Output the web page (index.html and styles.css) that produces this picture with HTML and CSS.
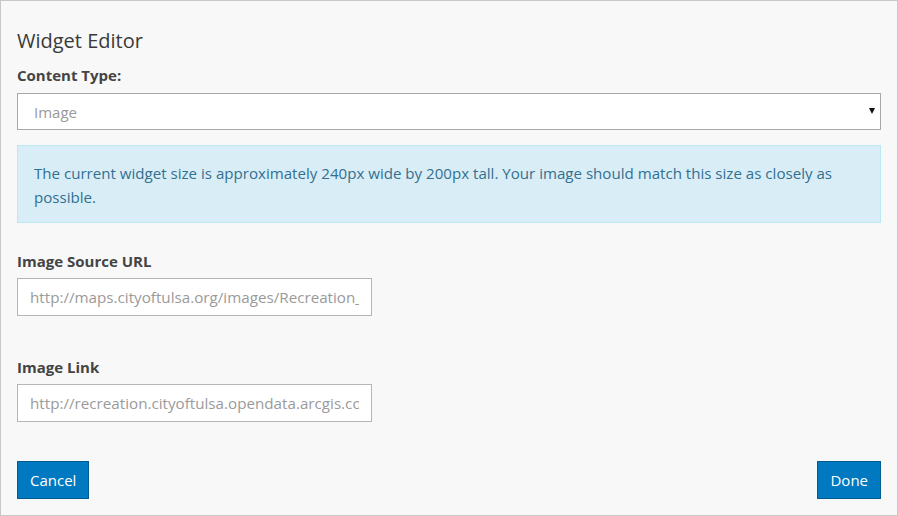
FILE: index.html
```html
<!DOCTYPE html>
<html lang="en">
<head>
    <title>Widget Editor</title>
    <meta charset="UTF-8">
    <meta name="viewport" content="width=device-width, initial-scale=1.0">
    <link rel="stylesheet" href="styles.css">
</head>
<body>
    <div class="dialog">
        <h2 class="title">Widget Editor</h2>
        <label class="label" for="contentType">Content Type:</label>
        <div class="select-wrap">
            <select id="contentType" class="select">
                <option>Image</option>
                <option>Text</option>
                <option>Chart</option>
            </select>
        </div>
        <div class="alert">
            The current widget size is approximately 240px wide by 200px tall. Your image should match this size as closely as possible.
        </div>
        <div class="field">
            <label class="label" for="imageSrc">Image Source URL</label>
            <input type="text" id="imageSrc" class="input" value="http://maps.cityoftulsa.org/images/Recreation_Logo.png">
        </div>
        <div class="field">
            <label class="label" for="imageLink">Image Link</label>
            <input type="text" id="imageLink" class="input" value="http://recreation.cityoftulsa.opendata.arcgis.com/">
        </div>
        <div class="footer">
            <button type="button" class="btn">Cancel</button>
            <button type="button" class="btn">Done</button>
        </div>
    </div>
</body>
</html>
```

FILE: styles.css
```css
body {
    margin: 0;
    font-family: "Open Sans", "Noto Sans", sans-serif;
    color: #4c4c4c;
    background-color: #fff;
}
.dialog {
    box-sizing: border-box;
    width: 898px;
    height: 516px;
    border: 1px solid #c8c8c8;
    background-color: #f8f8f8;
    padding: 28px 16px 16px;
    display: flex;
    flex-direction: column;
}
.title {
    margin: 0 0 12px;
    font-size: 20px;
    font-weight: 400;
    line-height: 24px;
    color: #3a3a3a;
}
.label {
    display: block;
    font-size: 15px;
    font-weight: 700;
    line-height: 20px;
    color: #444;
    margin-bottom: 8px;
}
.select-wrap {
    position: relative;
}
/* small black caret on the right of the select */
.select-wrap::after {
    content: "";
    position: absolute;
    right: 6px;
    top: 15px;
    border-left: 3.5px solid transparent;
    border-right: 3.5px solid transparent;
    border-top: 6px solid #111;
    pointer-events: none;
}
.select {
    -webkit-appearance: none;
    appearance: none;
    width: 100%;
    height: 37px;
    box-sizing: border-box;
    border: 1px solid #a9a9a9;
    background-color: #fff;
    padding: 0 16px;
    font-family: inherit;
    font-size: 15px;
    color: #999;
    border-radius: 0;
    outline: none;
}
.alert {
    margin-top: 15px;
    padding: 15px 16px 13px;
    background-color: #d9edf7;
    border: 1px solid #bce8f1;
    color: #31708f;
    font-size: 15.1px;
    line-height: 24px;
}
.field {
    margin-top: 28px;
}
.field + .field {
    margin-top: 41px;
}
.field .label {
    margin-bottom: 7px;
}
.input {
    display: block;
    width: 355px;
    height: 38px;
    box-sizing: border-box;
    border: 1px solid #b5b5b5;
    background-color: #fff;
    padding: 0 12px;
    font-family: inherit;
    font-size: 15.2px;
    color: #9a9a9a;
    outline: none;
}
.footer {
    margin-top: auto;
    display: flex;
    justify-content: space-between;
}
.btn {
    height: 38px;
    padding: 0 12px;
    background-color: #0079c1;
    border: 1px solid #005e95;
    color: #fff;
    font-family: inherit;
    font-size: 15px;
    cursor: pointer;
}
```
